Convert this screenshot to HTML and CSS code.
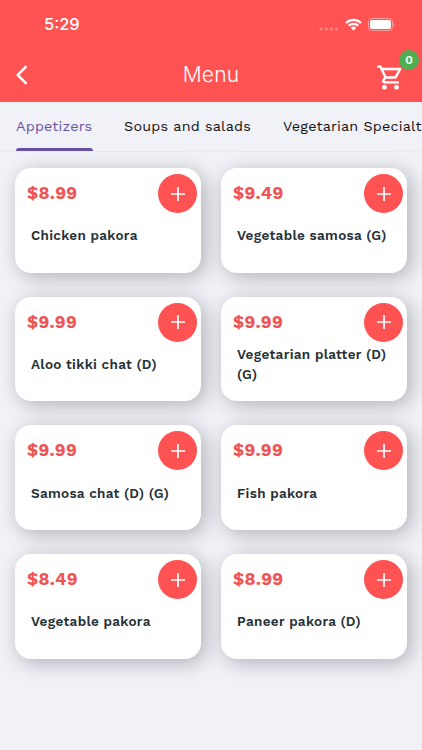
FILE: index.html
```html
<!DOCTYPE html>
<html lang="en">
<head>
<meta charset="utf-8">
<meta name="viewport" content="width=device-width, initial-scale=1">
<title>Menu</title>
<link rel="stylesheet" href="styles.css">
</head>
<body>
<svg class="defs" aria-hidden="true"><symbol id="plus" viewBox="0 0 14 14"><path d="M7 0V14M0 7H14" fill="none" stroke="currentColor" stroke-width="1.7"/></symbol></svg>
<header class="header">
  <div class="status">
    <span class="time">5:29</span>
    <div class="signals">
      <svg class="dots" width="20" height="4" viewBox="0 0 20 4"><g fill="#ff8180"><circle cx="2" cy="2" r="1.7"/><circle cx="7.2" cy="2" r="1.7"/><circle cx="12.4" cy="2" r="1.7"/><circle cx="17.6" cy="2" r="1.7"/></g></svg>
      <svg class="wifi" width="17" height="13" viewBox="0 0 17 13"><g fill="none" stroke="#fff" stroke-width="2.3"><path d="M1 5C5.2 .8 11.8 .8 16 5"/><path d="M3.7 7.8C6.4 5.1 10.6 5.1 13.3 7.8"/></g><path d="M8.5 12.5L5.7 9.7C7.3 8.2 9.7 8.2 11.3 9.7Z" fill="#fff"/></svg>
      <svg class="battery" width="27" height="13" viewBox="0 0 27 13"><rect x=".5" y=".5" width="24" height="12" rx="3.4" fill="none" stroke="#ff9d9c"/><rect x="2" y="2" width="21" height="9" rx="2" fill="#fff"/><path d="M25.6 4.5C27 5.2 27 7.8 25.6 8.5Z" fill="#ff9d9c"/></svg>
    </div>
  </div>
  <div class="nav">
    <svg class="back" width="12" height="20" viewBox="0 0 12 20"><path d="M10.5 1.2L1.7 10L10.5 18.8" fill="none" stroke="#fff" stroke-width="2.5"/></svg>
    <h1 class="title">Menu</h1>
    <div class="cart">
      <svg width="29" height="29" viewBox="0 0 24 24"><path fill="#fff" d="M15.55 13c.75 0 1.41-.41 1.75-1.03l3.58-6.49c.37-.66-.11-1.48-.87-1.48H5.21l-.94-2H1v2h2l3.6 7.59-1.35 2.44C4.52 15.37 5.48 17 7 17h12v-2H7l1.1-2h7.45zM6.16 6h12.15l-2.76 5H8.53L6.16 6zM7 18c-1.1 0-1.99.9-1.99 2S5.9 22 7 22s2-.9 2-2-.9-2-2-2zm10 0c-1.1 0-1.99.9-1.99 2s.89 2 1.99 2 2-.9 2-2-.9-2-2-2z"/></svg>
      <span class="badge">0</span>
    </div>
  </div>
</header>
<nav class="tabs">
  <a class="tab active">Appetizers</a>
  <a class="tab soups">Soups and salads</a>
  <a class="tab special">Vegetarian Specialties</a>
</nav>
<main class="grid">
  <article class="card"><span class="price">$8.99</span><button class="add" aria-label="Add"><svg><use href="#plus"/></svg></button><p class="name">Chicken pakora</p></article>
  <article class="card"><span class="price">$9.49</span><button class="add" aria-label="Add"><svg><use href="#plus"/></svg></button><p class="name">Vegetable samosa (G)</p></article>
  <article class="card"><span class="price">$9.99</span><button class="add" aria-label="Add"><svg><use href="#plus"/></svg></button><p class="name">Aloo tikki chat (D)</p></article>
  <article class="card"><span class="price">$9.99</span><button class="add" aria-label="Add"><svg><use href="#plus"/></svg></button><p class="name">Vegetarian platter (D)<br>(G)</p></article>
  <article class="card"><span class="price">$9.99</span><button class="add" aria-label="Add"><svg><use href="#plus"/></svg></button><p class="name">Samosa chat (D) (G)</p></article>
  <article class="card"><span class="price">$9.99</span><button class="add" aria-label="Add"><svg><use href="#plus"/></svg></button><p class="name">Fish pakora</p></article>
  <article class="card"><span class="price">$8.49</span><button class="add" aria-label="Add"><svg><use href="#plus"/></svg></button><p class="name">Vegetable pakora</p></article>
  <article class="card"><span class="price">$8.99</span><button class="add" aria-label="Add"><svg><use href="#plus"/></svg></button><p class="name">Paneer pakora (D)</p></article>
</main>
</body>
</html>
```
FILE: styles.css
```css
* { box-sizing: border-box; }
body {
  margin: 0;
  height: 750px;
  overflow: hidden;
  background: #f1f2f8;
  font-family: "Work Sans", Inter, "Liberation Sans", sans-serif;
}
.defs { display: none; }
svg { display: block; flex: none; }
.header { height: 102px; background: #ff5353; color: #fff; }
.status {
  height: 48px;
  padding: 0 27px 0 44px;
  display: flex;
  align-items: center;
  justify-content: space-between;
}
.time { font-family: Inter, sans-serif; font-size: 16.5px; font-weight: 550; line-height: 20px; }
.signals { display: flex; align-items: center; }
.dots { margin: 9px 6px 0 0; }
.wifi { margin-right: 6px; }
.nav {
  height: 54px;
  padding: 0 16px;
  display: grid;
  grid-template-columns: 1fr auto 1fr;
  align-items: center;
}
.title { margin: 0; font-family: Inter, sans-serif; font-size: 21px; font-weight: 300; line-height: 54px; letter-spacing: .2px; }
.cart { position: relative; justify-self: end; margin: 4px 1px 0 0; }
.badge {
  position: absolute;
  right: -14px;
  top: -13px;
  width: 20px;
  height: 20px;
  border-radius: 50%;
  background: #4caf50;
  font-size: 12px;
  font-weight: 600;
  line-height: 20px;
  text-align: center;
}
.tabs {
  height: 50px;
  padding-left: 16px;
  display: flex;
  gap: 31px;
  overflow: hidden;
  border-bottom: 1px solid #eaebf0;
}
.tab {
  flex: none;
  height: 49px;
  font-size: 14.4px;
  font-weight: 450;
  line-height: 49px;
  letter-spacing: .18px;
  color: #101014;
  white-space: nowrap;
}
.active { position: relative; width: 77px; color: #6750a4; }
.active::after {
  content: "";
  position: absolute;
  inset: auto 0 0;
  height: 3px;
  border-radius: 3px 3px 0 0;
  background: #6750a4;
}
.soups { width: 128px; }
.grid {
  padding: 16px 15px;
  display: grid;
  grid-template-columns: 186px 186px;
  grid-auto-rows: 104.7px;
  column-gap: 20px;
  row-gap: 24px;
}
.card {
  display: grid;
  grid-template-columns: 1fr 39px;
  grid-template-rows: 39px 1fr;
  padding: 6px 4px 15px 12px;
  background: #fff;
  border-radius: 16px;
  box-shadow: 4px 4px 20px rgba(0, 0, 0, .27);
}
.price { font-size: 17.6px; font-weight: 700; line-height: 39px; letter-spacing: .25px; color: #f05454; }
.add {
  width: 39px;
  height: 39px;
  padding: 0;
  border: 0;
  border-radius: 50%;
  background: #ff5252;
  color: #fff;
  display: grid;
  place-items: center;
}
.add svg { width: 14px; height: 14px; }
.name {
  grid-column: 1 / -1;
  align-self: center;
  margin: 0 0 0 4px;
  font-size: 13.5px;
  font-weight: 600;
  line-height: 20px;
  letter-spacing: .3px;
  white-space: nowrap;
  color: #263238;
}
```
